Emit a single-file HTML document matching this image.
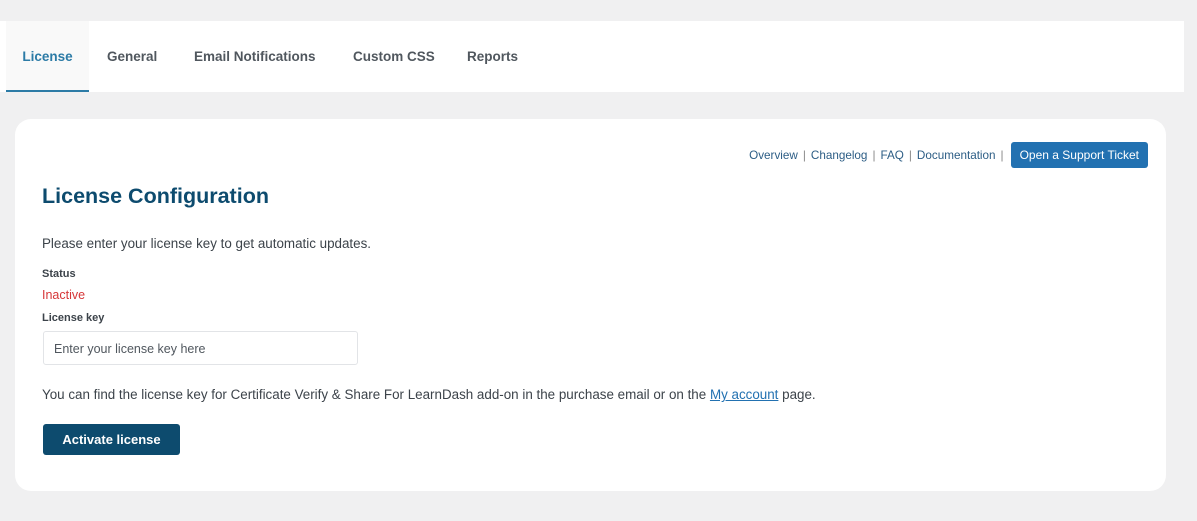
<!DOCTYPE html>
<html><head><style>
body{margin:0;background:#f0f0f1;font-family:"Liberation Sans",Arial,sans-serif;width:1197px;height:521px;position:relative;overflow:hidden;color:#3c434a}
.top{position:absolute;left:0;top:21px;width:1184px;height:71px;background:#fff}
.tab{position:absolute;top:0;height:71px;line-height:72px;font-size:13.5px;font-weight:bold;color:#50575e}
.card{position:absolute;left:15px;top:119px;width:1151px;height:372px;background:#fff;border-radius:16px}
.links{position:absolute;right:18px;top:23px;font-size:11.7px;color:#2c5d85;display:flex;align-items:center}
.links span.sep{color:#888;margin:0 5px}
.btn{background:#2271b1;color:#fff;border-radius:3px;padding:0 9px;height:26px;line-height:26px;font-size:12px;margin-left:2px}
.abs{position:absolute;left:27px}
</style></head><body>
<div class="top">
<div class="tab" style="left:6px;width:83px;background:#f9f9f9;color:#2c7ba6;text-align:center;border-bottom:2px solid #2c7ba6;height:69px;line-height:72px">License</div>
<div class="tab" style="left:107px">General</div>
<div class="tab" style="left:194px">Email Notifications</div>
<div class="tab" style="left:353px">Custom CSS</div>
<div class="tab" style="left:467px">Reports</div>
</div>
<div class="card">
<div class="links">Overview<span class="sep">|</span>Changelog<span class="sep">|</span>FAQ<span class="sep">|</span>Documentation<span class="sep">|</span><span class="btn">Open a Support Ticket</span></div>
<div class="abs" style="top:65px;font-size:21.5px;color:#0d4b6e;font-weight:bold">License Configuration</div>
<div class="abs" style="top:117px;font-size:13.4px">Please enter your license key to get automatic updates.</div>
<div class="abs" style="top:149px;font-size:11px;font-weight:bold">Status</div>
<div class="abs" style="top:169px;font-size:12.5px;color:#d63638">Inactive</div>
<div class="abs" style="top:193px;font-size:11px;font-weight:bold">License key</div>
<div class="abs" style="left:28px;top:212px;height:34px;border:1px solid #e2e4e7;border-radius:3px;font-size:12.5px;line-height:34px;padding-left:10px;box-sizing:border-box;width:315px;color:#50575e">Enter your license key here</div>
<div class="abs" style="top:268px;font-size:13.4px">You can find the license key for Certificate Verify &amp; Share For LearnDash add-on in the purchase email or on the <span style="color:#2271b1;text-decoration:underline">My account</span> page.</div>
<div class="abs" style="left:28px;top:305px;width:137px;height:31px;background:#0d4b6e;color:#fff;border-radius:3px;font-size:13px;font-weight:bold;text-align:center;line-height:31px">Activate license</div>
</div>
</body></html>
